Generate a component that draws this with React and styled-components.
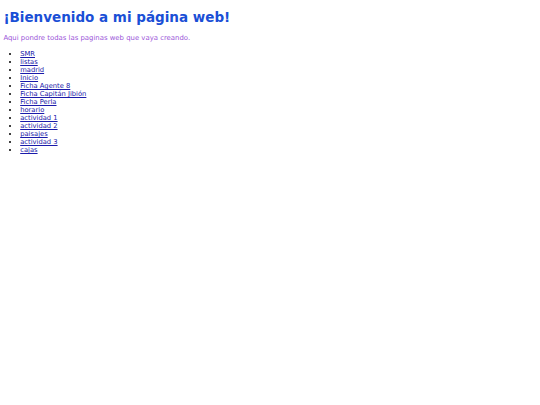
import React from "react";
import styled, { createGlobalStyle } from "styled-components";

const Global = createGlobalStyle`
  body {
    margin: 3.4px;
    font-family: "DejaVu Sans", Verdana, sans-serif;
    font-size: 6.75px;
    background: #fff;
  }
`;

const Title = styled.h1`
  font-size: 13.5px;
  font-weight: bold;
  color: #1a4fd6;
  margin: 6px 0 9px;
`;

const Intro = styled.p`
  font-size: 6.9px;
  color: #9b55d9;
  margin: 6.75px 0;
`;

const List = styled.ul`
  margin: 7.75px 0;
  padding-left: 16.8px;
  line-height: 8px;
`;

const Link = styled.a`
  color: #1a1aaa;
  text-decoration: underline;
`;

const pages = [
  "SMR",
  "listas",
  "madrid",
  "Inicio",
  "Ficha Agente 8",
  "Ficha Capitán Jibión",
  "Ficha Perla",
  "horario",
  "actividad 1",
  "actividad 2",
  "paisajes",
  "actividad 3",
  "cajas",
];

export default function App() {
  return (
    <>
      <Global />
      <Title>¡Bienvenido a mi página web!</Title>
      <Intro>Aqui pondre todas las paginas web que vaya creando.</Intro>
      <List>
        {pages.map((p) => (
          <li key={p}>
            <Link href="#">{p}</Link>
          </li>
        ))}
      </List>
    </>
  );
}
